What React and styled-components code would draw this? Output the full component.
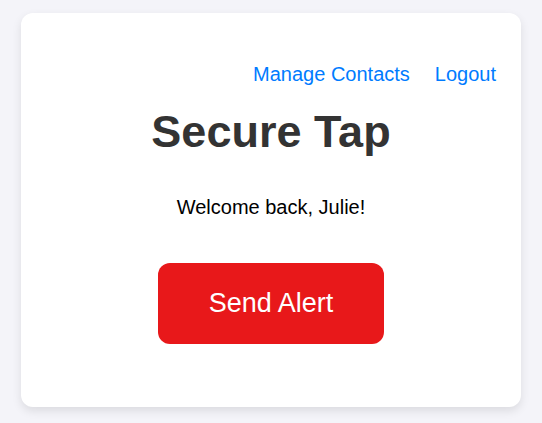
import React from "react";
import styled, { createGlobalStyle } from "styled-components";

const GlobalStyle = createGlobalStyle`
	body {
		margin: 0;
		background-color: #f4f4f9;
		font-family: "Liberation Sans", Arial, sans-serif;
	}
`;

const Page = styled.div`
	padding: 13px 21px;
	display: flex;
	justify-content: center;
`;

const Card = styled.div`
	width: 500px;
	box-sizing: border-box;
	padding: 24px 25px 63px;
	background-color: #ffffff;
	border-radius: 12px;
	box-shadow: 0 4px 10px rgba(0, 0, 0, 0.1);
	display: flex;
	flex-direction: column;
	align-items: center;
`;

const Nav = styled.nav`
	align-self: stretch;
	display: flex;
	justify-content: flex-end;
	gap: 25px;
	margin-top: 26px;
`;

const NavLink = styled.a`
	font-size: 20px;
	color: #007bff;
	text-decoration: none;
	cursor: pointer;
`;

const Title = styled.h1`
	margin: 20px 0 0;
	font-size: 45px;
	font-weight: 700;
	color: #333333;
`;

const Welcome = styled.p`
	margin: 38px 0 0;
	font-size: 20px;
	color: #000000;
`;

const AlertButton = styled.button`
	margin-top: 44px;
	width: 226px;
	height: 81px;
	border: none;
	border-radius: 12px;
	background-color: #e8181a;
	color: #ffffff;
	font-family: "Liberation Sans", Arial, sans-serif;
	font-size: 27px;
	cursor: pointer;
`;

const App = () => {
	return (
		<>
			<GlobalStyle />
			<Page>
				<Card>
					<Nav>
						<NavLink>Manage Contacts</NavLink>
						<NavLink>Logout</NavLink>
					</Nav>
					<Title>Secure Tap</Title>
					<Welcome>Welcome back, Julie!</Welcome>
					<AlertButton>Send Alert</AlertButton>
				</Card>
			</Page>
		</>
	);
};

export default App;
